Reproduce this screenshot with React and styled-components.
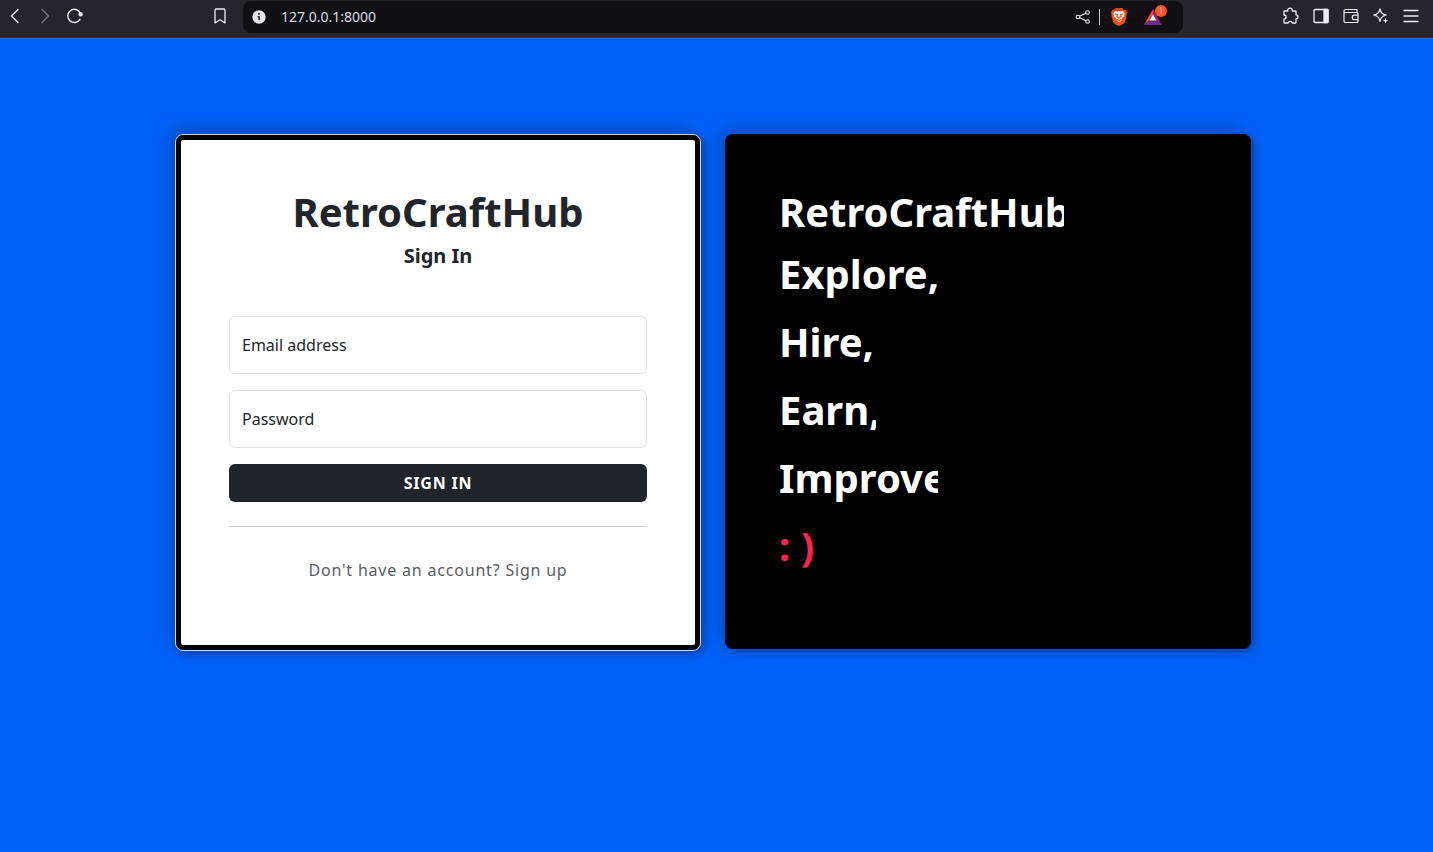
import React from 'react';
import styled, { createGlobalStyle } from 'styled-components';

const GlobalStyle = createGlobalStyle`
  *, *::before, *::after { box-sizing: border-box; }
  body {
    margin: 0;
    background: #0061f7;
    color: #212529;
    font: 400 16px/24px "Noto Sans", sans-serif;
  }
  h1, h2, p, hr { margin: 0; }
`;

const Page = styled.div`
  min-height: 100vh;
`;

const Toolbar = styled.header`
  display: flex;
  align-items: flex-start;
  height: 38px;
  background: #25252b;
  border-bottom: 1px solid #34343a;
`;

const NavGroup = styled.nav`
  display: flex;
  justify-content: space-between;
  flex: 0 0 243px;
  padding: 1px 8px 0 0;
`;

const ButtonRow = styled.div`
  display: flex;
`;

const IconButton = styled.button`
  display: flex;
  align-items: center;
  justify-content: center;
  width: 30px;
  height: 30px;
  padding: 0;
  border: 0;
  background: none;
  color: ${({ $muted }) => ($muted ? '#77777c' : '#ededf0')};
  svg { display: block; }
`;

const AddressBar = styled.div`
  display: flex;
  align-items: center;
  flex: 0 1 940px;
  min-width: 0;
  height: 32px;
  margin-top: 1px;
  padding: 0 11px 0 9px;
  border-radius: 8px;
  background: #101012;
  svg { display: block; flex: none; }
`;

const AddressInput = styled.input`
  flex: 1;
  min-width: 0;
  margin-left: 15px;
  padding: 0;
  border: 0;
  background: none;
  color: #dcdce2;
  font: 400 14px/20px "Noto Sans", sans-serif;
`;

const AddressTools = styled.div`
  display: flex;
  align-items: center;
`;

const Separator = styled.span`
  width: 1px;
  height: 16px;
  margin: 0 4px 0 1px;
  background: #c8c8cc;
`;

const ToolGroup = styled.div`
  display: flex;
  flex: 1 0 auto;
  justify-content: flex-end;
  padding: 1px 7px 0 0;
`;

const Rewards = styled.button`
  position: relative;
  display: flex;
  align-items: center;
  justify-content: center;
  width: 38px;
  height: 30px;
  padding: 0;
  border: 0;
  background: none;
`;

const Badge = styled.span`
  position: absolute;
  top: 3px;
  right: 5px;
  width: 12px;
  height: 12px;
  border-radius: 6px;
  background: #ff5030;
  color: #ffd5cb;
  font: 400 8px/12px "Noto Sans", sans-serif;
  text-align: center;
`;

const Main = styled.main`
  display: grid;
  grid-template-columns: repeat(2, minmax(0, 526px));
  justify-content: center;
  align-items: start;
  gap: 24px;
  padding: 96px 19px 96px 12px;
`;

const Panel = styled.section`
  border-radius: 8px;
  box-shadow: 4px 4px 10px rgba(0, 0, 0, 0.25), -6px -6px 18px rgba(0, 0, 0, 0.18);
`;

const SignInCard = styled(Panel)`
  border: 1px solid #d2d2d2;
  background: #000;
`;

const SignInBody = styled.div`
  margin: 5px;
  padding: 48px 48px 63px;
  border-radius: 2px;
  background: #fff;
`;

const Pitch = styled(Panel)`
  padding: 54px 54px 73px;
  background: #000;
`;

const Title = styled.h1`
  margin-bottom: 8px;
  font-size: 40px;
  line-height: 48px;
  font-weight: 700;
  text-align: center;
`;

const Subtitle = styled.h2`
  font-size: 20px;
  line-height: 24px;
  font-weight: 700;
  text-align: center;
`;

const Form = styled.form`
  display: grid;
  gap: 16px;
  margin-top: 48px;
`;

const Field = styled.div`
  position: relative;
`;

const FieldLabel = styled.label`
  position: absolute;
  top: 0;
  left: 0;
  padding: 17px 13px;
  pointer-events: none;
`;

const FieldInput = styled.input`
  display: block;
  width: 100%;
  height: 58px;
  padding: 16px 12px;
  border: 1px solid #dee2e6;
  border-radius: 6px;
  background: #fff;
  font: inherit;
`;

const SubmitButton = styled.button`
  height: 38px;
  padding: 0;
  border: 0;
  border-radius: 6px;
  background: #212529;
  color: #fff;
  font: 700 16px/24px "Noto Sans", sans-serif;
  letter-spacing: 0.05em;
`;

const Divider = styled.hr`
  margin: 24px 0 31px;
  border: 0;
  border-top: 1px solid #c8c9ca;
`;

const SignUp = styled.p`
  text-align: center;
`;

const SignUpLink = styled.a`
  color: #595c5f;
  letter-spacing: 0.05em;
  text-decoration: none;
`;

const Typed = styled.p`
  width: ${({ $width }) => $width};
  margin-bottom: ${({ $last }) => ($last ? '0' : '8px')};
  overflow: hidden;
  color: ${({ $accent }) => ($accent ? '#ff2056' : '#fff')};
  font-size: 40px;
  line-height: ${({ $lead }) => ($lead ? '48px' : '60px')};
  font-weight: 700;
  white-space: nowrap;
`;

const Icon = ({ size = 18, children, width = 1.3 }) => (
  <svg width={size} height={size} viewBox="0 0 18 18" fill="none" stroke="currentColor"
    strokeWidth={width} strokeLinecap="round" strokeLinejoin="round" aria-hidden="true">
    {children}
  </svg>
);

// Each line is revealed up to its own width, as by a typing animation.
const lines = [
  { text: 'RetroCraftHub', width: '285px', lead: true },
  { text: 'Explore,', width: '160px' },
  { text: 'Hire,', width: '97px' },
  { text: 'Earn,', width: '97px' },
  { text: 'Improve', width: '159px' },
  { text: ': )', width: '60px', accent: true },
];

function BrowserBar() {
  return (
    <Toolbar>
      <NavGroup aria-label="Browser navigation">
        <ButtonRow>
          <IconButton aria-label="Back"><Icon><path d="M12 2.5 5.5 9l6.5 6.5" /></Icon></IconButton>
          <IconButton aria-label="Forward" $muted><Icon><path d="m6 2.5 6.500 6.500L6 15.500" /></Icon></IconButton>
          <IconButton aria-label="Reload">
            <Icon width={1.4}>
              <path d="M14 12.400A6.600 6.600 0 1 1 14.200 5.800" />
              <circle cx="14.600" cy="7.300" r="1.500" fill="currentColor" />
            </Icon>
          </IconButton>
        </ButtonRow>
        <IconButton aria-label="Bookmark">
          <Icon><path d="M5 2h8a1 1 0 0 1 1 1v13l-5-3.200L4 16V3a1 1 0 0 1 1-1Z" /></Icon>
        </IconButton>
      </NavGroup>
      <AddressBar>
        <svg width="14" height="14" viewBox="0 0 14 14" aria-hidden="true">
          <circle cx="7" cy="7" r="6.700" fill="#e3e3e8" />
          <path d="M6 3h2v1.700H6zM5.500 6H8v4H6.300V7.300h-.8z" fill="#3b3b40" />
        </svg>
        <AddressInput aria-label="Address" defaultValue="127.0.0.1:8000" />
        <AddressTools>
          <IconButton aria-label="Share">
            <Icon width={1.100}>
              <circle cx="4" cy="9" r="1.800" />
              <circle cx="13.500" cy="4.500" r="1.800" />
              <circle cx="13.500" cy="13.500" r="1.800" />
              <path d="m5.700 8.200 6.100-2.900M5.700 9.800l6.100 2.900" />
            </Icon>
          </IconButton>
          <Separator />
          <IconButton aria-label="Brave Shields">
            <svg width="16" height="18" viewBox="0 0 16 18">
              <path fill="#fb4a1c" d="M4.600 0h6.800l1.500 1.700 1.600.2 1.500 2.400-.6 1.600.3 1.200-1.900 7.100-1.500 1.700L8 18l-4.300-2.100-1.500-1.700L.3 7.100l.3-1.200L0 4.300l1.500-2.400 1.600-.2Z" />
              <path fill="#fff" d="m4.300 3 2.200.4L8 3.100l1.500.3 2.200-.4 2 2.500-.7 2.700-2.300 2.200.5 1.400L8 14.600l-3.200-2.800.5-1.400L3 8.200l-.7-2.700Z" />
              <path stroke="#fb4a1c" strokeWidth="1.200" fill="none" d="m3.800 5.800 2.700.9-.6 2 2.100 1.100 2.100-1.100-.6-2 2.700-.9M8 9.800v1.700M5.500 11.300 8 12.700l2.500-1.400" />
            </svg>
          </IconButton>
          <Rewards aria-label="Brave Rewards">
            <svg width="18" height="16" viewBox="0 0 18 16">
              <path fill="#ff4a22" d="M9 0v5.500L5.500 11.500 0 16Z" />
              <path fill="#9e1f63" d="m9 0 9 16-5.500-4.500L9 5.500Z" />
              <path fill="#662d91" d="m0 16 5.500-4.500h7L18 16Z" />
              <path fill="#fff" d="m9 5.500 3.500 6h-7Z" />
            </svg>
            <Badge>1</Badge>
          </Rewards>
        </AddressTools>
      </AddressBar>
      <ToolGroup>
        <IconButton aria-label="Extensions">
          <Icon><path d="M2.500 4h3.300a2.300 2.300 0 1 1 4.400 0h3.300a.5.500 0 0 1 .5.500v3.300a2 2 0 1 1 0 4v3.700a.5.500 0 0 1-.5.500h-3.200a2.200 2.200 0 0 0-4.200 0H2.500a.5.500 0 0 1-.5-.5v-3.300a2.100 2.100 0 1 0 0-4.200V4.500a.5.500 0 0 1 .5-.5Z" /></Icon>
        </IconButton>
        <IconButton aria-label="Side panel">
          <Icon><rect x="2" y="2.500" width="14" height="13" rx="1" /><path d="M12 2.500h4v13h-4z" fill="currentColor" /></Icon>
        </IconButton>
        <IconButton aria-label="Wallet">
          <Icon width={1.200}><path d="M2 5.500V4a1.500 1.500 0 0 1 1.500-1.500H15V5M2 5.500h13a1 1 0 0 1 1 1v8a1 1 0 0 1-1 1H3.500A1.500 1.500 0 0 1 2 14ZM16 8.200h-3.500a2 2 0 0 0 0 4.500H16" /></Icon>
        </IconButton>
        <IconButton aria-label="Leo assistant">
          <Icon width={1.200}><path d="M8 1.800c.6 3.700 2.200 5.700 6.300 6.200-2.500.4-4 1.400-4.900 2.800-.6.900-1 2-1.400 3.600-.7-4-2.300-5.800-6.300-6.400C5.700 7.400 7.300 5.500 8 1.800Z" /><path d="m13.500 11 .8 1.900 1.900.8-1.900.8-.8 1.900-.8-1.900-1.900-.8 1.900-.8Z" fill="currentColor" stroke="none" /></Icon>
        </IconButton>
        <IconButton aria-label="Menu">
          <Icon><path d="M2 3.500h14M2 9h14M2 14.500h14" /></Icon>
        </IconButton>
      </ToolGroup>
    </Toolbar>
  );
}

export default function App() {
  return (
    <Page>
      <GlobalStyle />
      <BrowserBar />
      <Main>
        <SignInCard>
          <SignInBody>
            <Title>RetroCraftHub</Title>
            <Subtitle>Sign In</Subtitle>
            <Form onSubmit={(event) => event.preventDefault()}>
              <Field>
                <FieldInput id="email" type="email" />
                <FieldLabel htmlFor="email">Email address</FieldLabel>
              </Field>
              <Field>
                <FieldInput id="password" type="password" />
                <FieldLabel htmlFor="password">Password</FieldLabel>
              </Field>
              <SubmitButton type="submit">SIGN IN</SubmitButton>
            </Form>
            <Divider />
            <SignUp><SignUpLink href="#signup">Don't have an account? Sign up</SignUpLink></SignUp>
          </SignInBody>
        </SignInCard>
        <Pitch>
          {lines.map((line, index) => (
            <Typed key={line.text} $width={line.width} $lead={line.lead} $accent={line.accent}
              $last={index === lines.length - 1}>
              {line.text}
            </Typed>
          ))}
        </Pitch>
      </Main>
    </Page>
  );
}
